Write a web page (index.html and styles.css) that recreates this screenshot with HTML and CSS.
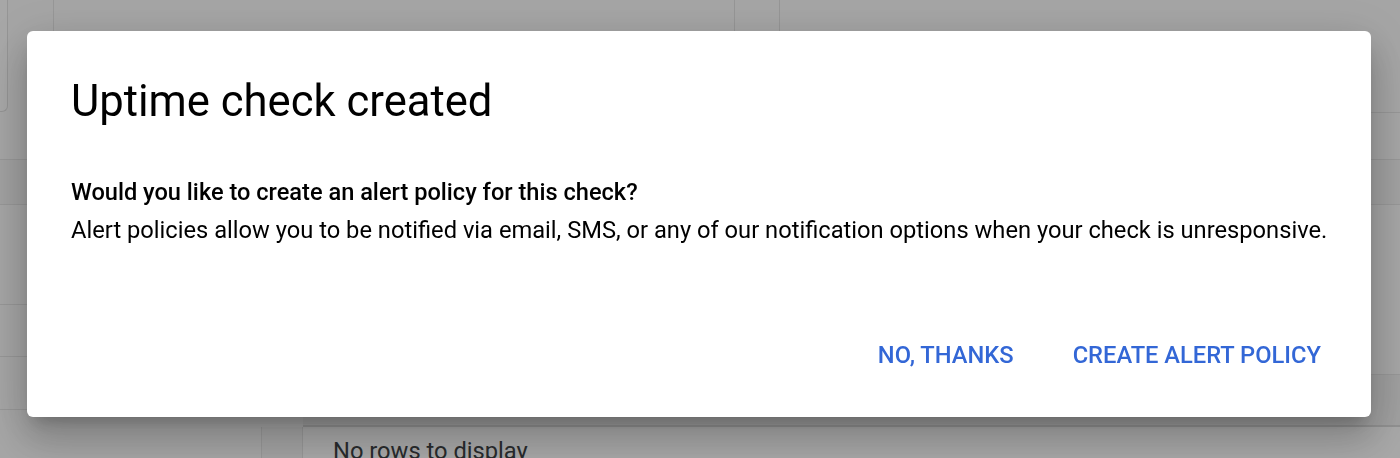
FILE: index.html
```html
<!DOCTYPE html>
<html lang="en">
<head>
<meta charset="utf-8">
<title>Uptime check created</title>
<link rel="stylesheet" href="styles.css">
</head>
<body>
<div class="page">
  <div class="sec-top">
    <div class="stub-card"></div>
    <div class="rail"></div>
    <div class="top-main"></div>
    <div class="top-mid"></div>
    <div class="top-rest"><div class="top-rest-head"></div></div>
  </div>
  <div class="sec-shade"></div>
  <div class="sec-mid">
    <div class="mid-left">
      <div class="row h100"></div>
      <div class="row h52"></div>
      <div class="row h53"></div>
    </div>
    <div class="mid-right">
      <div class="row h170"></div>
      <div class="row grow"></div>
    </div>
  </div>
  <div class="sec-bottom">
    <div class="b-left"></div>
    <div class="b-gap"></div>
    <div class="b-panel">
      <div class="table-empty">No rows to display</div>
    </div>
  </div>
</div>
<div class="scrim"></div>
<div class="dialog" role="dialog" aria-labelledby="dlg-title">
  <h1 class="dialog-title" id="dlg-title">Uptime check created</h1>
  <div class="dialog-body">
    <p class="question">Would you like to create an alert policy for this check?</p>
    <p class="explain">Alert policies allow you to be notified via email, SMS, or any of our notification options when your check is unresponsive.</p>
  </div>
  <div class="dialog-actions">
    <button class="btn" type="button">NO, THANKS</button>
    <button class="btn" type="button">CREATE ALERT POLICY</button>
  </div>
</div>
</body>
</html>
```

FILE: styles.css
```css
* { box-sizing: border-box; }
html, body { margin: 0; padding: 0; }
body {
  width: 1400px;
  height: 458px;
  overflow: hidden;
  font-family: Roboto, "Liberation Sans", Arial, sans-serif;
  background: #fff;
}

/* background page (under the scrim) */
.page {
  display: flex;
  flex-direction: column;
  height: 458px;
  background: #f7f7f7;
}
.sec-top {
  height: 160px;
  flex: none;
  display: flex;
  border-bottom: 1px solid #e2e2e2;
}
.stub-card {
  width: 8px;
  height: 112px;
  background: #fafafa;
  border: 1px solid #dedede;
  border-left: none;
  border-top: none;
  border-bottom-right-radius: 6px;
}
.rail { width: 46px; border-right: 1px solid #e2e2e2; }
.top-main { width: 681px; border-right: 1px solid #e0e0e0; }
.top-mid { width: 45px; border-right: 1px solid #e0e0e0; }
.top-rest { flex: 1; }
.top-rest-head { height: 113px; border-bottom: 1px solid #e2e2e2; }

.sec-shade {
  height: 45px;
  flex: none;
  background: #f1f1f1;
  border-bottom: 1px solid #e2e2e2;
}
.sec-mid {
  height: 222px;
  flex: none;
  display: flex;
}
.mid-left { width: 303px; display: flex; flex-direction: column; }
.mid-right { flex: 1; display: flex; flex-direction: column; }
.row { border-bottom: 1px solid #e2e2e2; }
.h100 { height: 100px; }
.h52 { height: 52px; }
.h53 { height: 53px; }
.h170 { height: 170px; }
.grow { flex: 1; border-bottom: 2px solid #d8d8d8; background: #eeeeee; }

.sec-bottom { flex: 1; display: flex; }
.b-left { width: 262px; border-right: 1px solid #e2e2e2; }
.b-gap { width: 41px; border-right: 1px solid #e2e2e2; background: #f3f3f3; }
.b-panel { flex: 1; background: #fafafa; }
.table-empty {
  padding: 10px 0 0 30px;
  font-size: 23.7px;
  line-height: 28px;
  color: #3c4043;
}

/* scrim */
.scrim {
  position: fixed;
  inset: 0;
  background: rgba(0, 0, 0, 0.33);
}

/* dialog */
.dialog {
  position: fixed;
  left: 27px;
  top: 31px;
  width: 1344px;
  height: 386px;
  background: #fff;
  border-radius: 6px;
  padding: 45px 42px 40px 44px;
  display: flex;
  flex-direction: column;
  box-shadow: 0 11px 15px -7px rgba(0,0,0,.2), 0 24px 38px 3px rgba(0,0,0,.14), 0 9px 46px 8px rgba(0,0,0,.12);
}
.dialog-title {
  margin: 0;
  font-size: 43.6px;
  line-height: 52px;
  font-weight: 400;
  color: #000;
}
.dialog-body {
  margin-top: 45px;
  margin-right: -20px;
  color: #000;
  font-size: 23.6px;
  line-height: 38px;
}
.dialog-body p { margin: 0; }
.question { font-weight: 500; }
.explain { white-space: nowrap; font-size: 23.7px; }
.dialog-actions {
  margin-top: auto;
  display: flex;
  justify-content: flex-end;
  gap: 43px;
}
.btn {
  font-family: Roboto, "Liberation Sans", Arial, sans-serif;
  font-size: 23.7px;
  line-height: 28px;
  font-weight: 500;
  color: #3367d6;
  background: none;
  border: none;
  padding: 8px;
  cursor: pointer;
}
```
